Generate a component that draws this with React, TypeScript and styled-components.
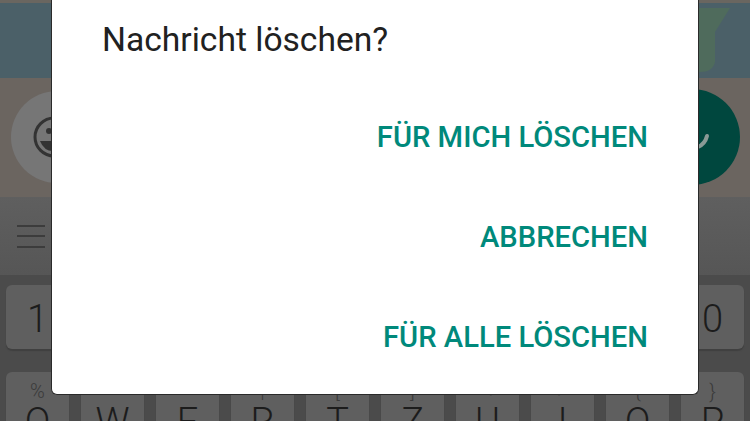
import React from "react";
import styled, { createGlobalStyle } from "styled-components";

const GlobalStyle = createGlobalStyle`
  html, body { margin: 0; padding: 0; background: #4a4a4a; }
  body { font-family: Roboto, "Liberation Sans", sans-serif; }
`;

const Screen = styled.div`
  position: relative;
  width: 750px;
  height: 421px;
  overflow: hidden;
  background: #4a4a4a;
`;

const ChatArea = styled.div`
  position: relative;
  height: 75px;
  border-top: 3px solid #6a6660;
  background: #4b6068;
  overflow: hidden;
`;

const Bubble = styled.svg`
  position: absolute;
  top: 5px;
  right: 0;
`;

const InputBar = styled.div`
  height: 117px;
  background: #6b6560;
  display: flex;
  align-items: center;
  justify-content: space-between;
  padding: 0 10px 2px 11px;
`;

const EmojiButton = styled.div`
  width: 92px;
  height: 92px;
  border-radius: 50%;
  background: #767676;
  display: flex;
  align-items: center;
  padding-left: 22px;
  box-sizing: border-box;
  color: #333;
`;

const SendButton = styled.div`
  width: 96px;
  height: 96px;
  border-radius: 50%;
  background: #00473e;
  display: flex;
  align-items: center;
  justify-content: center;
`;

const Toolbar = styled.div`
  height: 78px;
  padding: 0 17px;
  display: flex;
  flex-direction: column;
  justify-content: center;
  gap: 8.5px;
  background: linear-gradient(#5f5f5f, #565656);
`;

const MenuLine = styled.div`
  width: 28px;
  height: 2px;
  background: #3c3c3c;
`;

const Keyboard = styled.div`
  background: #4b4b4b;
  padding: 10px 6px 0 6px;
  display: flex;
  flex-direction: column;
  gap: 23px;
`;

const KeyRow = styled.div`
  display: grid;
  grid-template-columns: repeat(10, 63px);
  justify-content: space-between;
`;

const Key = styled.div<{ $tall?: boolean }>`
  position: relative;
  height: ${(p) => (p.$tall ? "80px" : "64px")};
  box-sizing: border-box;
  border-radius: 6px;
  background: #5f5f5f;
  box-shadow: 0 2px 1px #404040;
  color: #1c1c1c;
  font-size: 38px;
  font-weight: 300;
  display: flex;
  align-items: ${(p) => (p.$tall ? "flex-start" : "center")};
  justify-content: center;
  padding-top: ${(p) => (p.$tall ? "31px" : "3px")};
  line-height: 1;
`;

const KeyHint = styled.span`
  position: absolute;
  top: 9px;
  left: 0;
  right: 0;
  text-align: center;
  font-size: 20px;
  color: #3a3a3a;
`;

const Dialog = styled.div`
  position: absolute;
  top: 0;
  left: 51px;
  width: 648px;
  height: 395px;
  box-sizing: border-box;
  background: #fff;
  border: 1px solid #2a2a2a;
  border-top: 0;
  border-radius: 0 0 6px 6px;
  padding: 19px 50px 0 50px;
  display: flex;
  flex-direction: column;
`;

const Title = styled.div`
  font-size: 33.6px;
  line-height: 42px;
  color: #212121;
  height: 68px;
`;

const Actions = styled.div`
  display: flex;
  flex-direction: column;
  align-items: flex-end;
`;

const Action = styled.div`
  height: 100px;
  display: flex;
  align-items: center;
  font-size: 29.2px;
  font-weight: 500;
  color: #00897b;
`;

const numbers = ["1", "2", "3", "4", "5", "6", "7", "8", "9", "0"];
const letters: [string, string][] = [
  ["Q", "%"],
  ["W", "^"],
  ["E", "~"],
  ["R", "|"],
  ["T", "["],
  ["Z", "]"],
  ["U", "<"],
  ["I", ">"],
  ["O", "{"],
  ["P", "}"],
];

export default function App() {
  return (
    <>
      <GlobalStyle />
      <Screen>
        <ChatArea>
          <Bubble width="110" height="68" viewBox="0 0 110 68">
            <path d="M0 0 H90 L75 24 V54 Q73 64 60 64 H0 Z" fill="#4f6b5c" />
          </Bubble>
        </ChatArea>
        <InputBar>
          <EmojiButton>
            <svg width="36" height="44" viewBox="0 0 36 44" fill="none" stroke="#333" strokeWidth="3">
              <circle cx="21" cy="22" r="19" />
              <circle cx="16" cy="16" r="3" fill="#333" stroke="none" />
              <path d="M7 26 H34 Q30 36 20 36 Q11 36 7 26 Z" fill="#333" stroke="none" />
            </svg>
          </EmojiButton>
          <SendButton>
            <svg width="40" height="40" viewBox="0 0 40 40" fill="none" stroke="#8a9a96" strokeWidth="4">
              <path d="M35 19 Q33 27 26 30" strokeLinecap="round" />
            </svg>
          </SendButton>
        </InputBar>
        <Toolbar>
          <MenuLine />
          <MenuLine />
          <MenuLine />
        </Toolbar>
        <Keyboard>
          <KeyRow>
            {numbers.map((n) => (
              <Key key={n}>{n}</Key>
            ))}
          </KeyRow>
          <KeyRow>
            {letters.map(([l, h]) => (
              <Key key={l} $tall>
                <KeyHint>{h}</KeyHint>
                {l}
              </Key>
            ))}
          </KeyRow>
        </Keyboard>
        <Dialog>
          <Title>Nachricht löschen?</Title>
          <Actions>
            <Action>FÜR MICH LÖSCHEN</Action>
            <Action>ABBRECHEN</Action>
            <Action>FÜR ALLE LÖSCHEN</Action>
          </Actions>
        </Dialog>
      </Screen>
    </>
  );
}
